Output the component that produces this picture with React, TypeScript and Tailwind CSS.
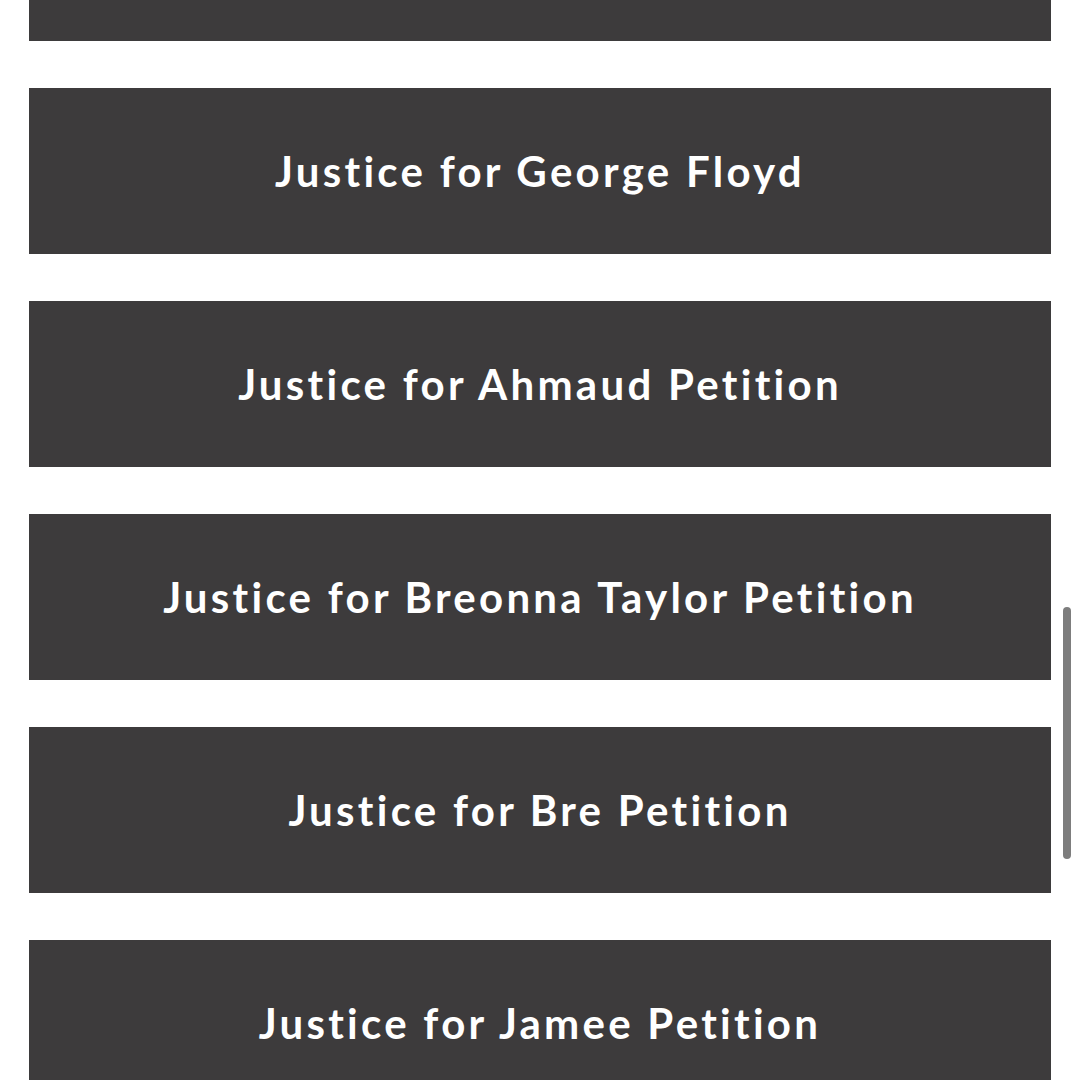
const petitions = [
  "Justice for George Floyd",
  "Justice for Ahmaud Petition",
  "Justice for Breonna Taylor Petition",
  "Justice for Bre Petition",
  "Justice for Jamee Petition",
];

export default function App() {
  return (
    <div className="relative h-[1080px] w-[1080px] overflow-hidden bg-white">
      <div className="flex flex-col gap-[47px] px-[29px]">
        {/* previous item, scrolled mostly out of view */}
        <div className="h-[41px] bg-[#3d3b3c]" />
        {petitions.map((p) => (
          <a
            key={p}
            href="#"
            className="flex h-[166px] shrink-0 items-center justify-center bg-[#3d3b3c] text-[42px] font-bold tracking-[0.078em] text-white"
            style={{ fontFamily: "Lato, 'Open Sans', sans-serif" }}
          >
            {p}
          </a>
        ))}
      </div>
      {/* scrollbar */}
      <div className="absolute left-[1063px] top-[607px] h-[252px] w-[8px] rounded-full bg-[#7d7d7d]" />
    </div>
  );
}
